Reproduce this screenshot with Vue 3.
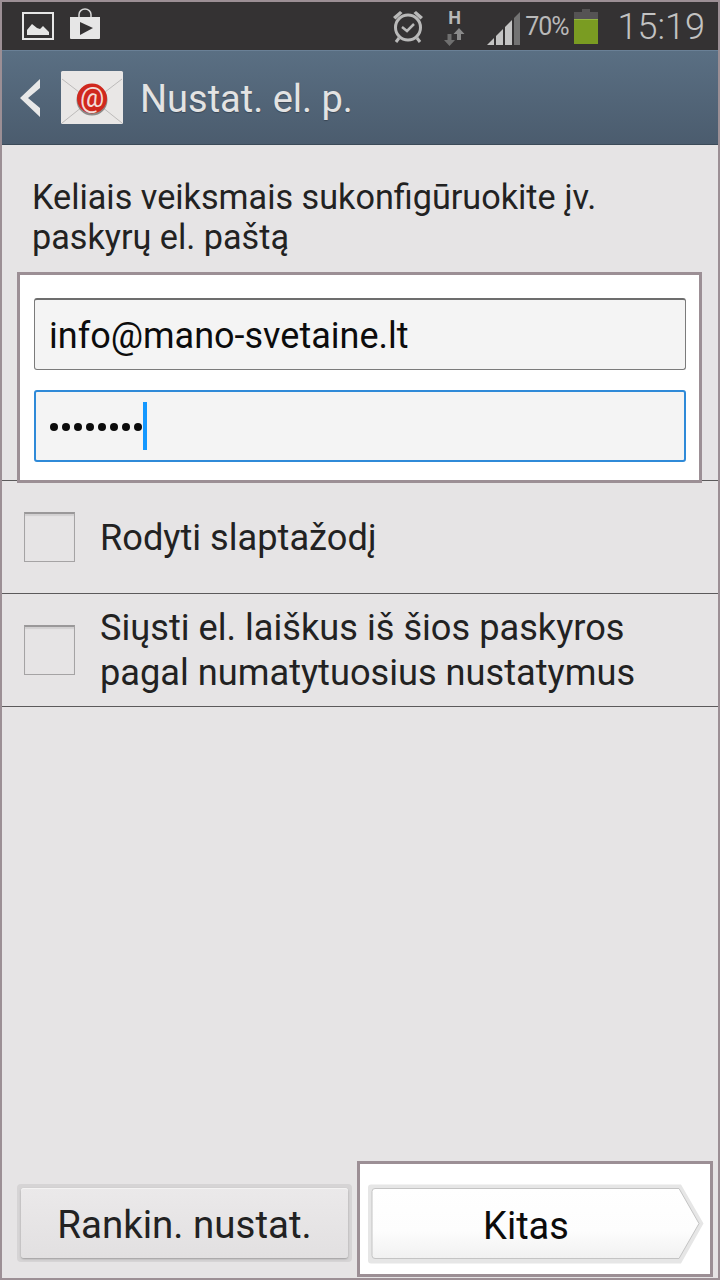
<template>
  <div class="phone">
    <div class="status-bar">
      <svg class="ic-gallery" width="32" height="28" viewBox="0 0 32 28">
        <rect x="1" y="1" width="30" height="26" fill="none" stroke="#e6e6e6" stroke-width="2" />
        <path d="M5 23v-5l5-6 5 4 3 1 3-3 6 6v3z" fill="#e6e6e6" />
      </svg>
      <svg class="ic-bag" width="32" height="32" viewBox="0 0 32 32">
        <path d="M10 9V6.500a6 5.500 0 0 1 12 0V9" fill="none" stroke="#d8d8d8" stroke-width="1.500" />
        <path d="M1 9h30v21a1 1 0 0 1-1 1H2a1 1 0 0 1-1-1z" fill="#e6e6e6" />
        <path d="M11 14l13 6-13 7z" fill="#343233" />
      </svg>
      <div class="spacer"></div>
      <svg class="ic-alarm" width="32" height="35" viewBox="0 0 32 35">
        <circle cx="16" cy="18.500" r="12.500" fill="none" stroke="#b9b9b9" stroke-width="3" />
        <path d="M1 8l7-6 2.500 2-7 6.500zM31 8l-7-6-2.500 2 7 6.500z" fill="#b9b9b9" />
        <path d="M10 18l5 4 7-7" fill="none" stroke="#b9b9b9" stroke-width="2.500" />
        <path d="M7 29l-3 4M25 29l3 4" stroke="#b9b9b9" stroke-width="3" />
      </svg>
      <div class="net">
        <span class="net-h">H</span>
        <svg width="21" height="18" viewBox="0 0 21 18">
          <path d="M3.500 6h4v6H11l-5.500 6L0 12h3.500z" fill="#6f6f6f" />
          <path d="M13 12h4V6h3.500L15 0 9.500 6H13z" fill="#8a8a8a" />
        </svg>
      </div>
      <svg class="ic-signal" width="33" height="34" viewBox="0 0 33 34">
        <path d="M0 34l7-7v7z" fill="#c4c4c4" />
        <path d="M9 34V25l7-7v16z" fill="#c4c4c4" />
        <path d="M18 34V16l7-7v25z" fill="#c4c4c4" />
        <path d="M27 34V7l6-6v33z" fill="#737373" />
      </svg>
      <span class="pct">70%</span>
      <div class="battery">
        <div class="battery-cap"></div>
        <div class="battery-empty"></div>
        <div class="battery-fill"></div>
      </div>
      <span class="clock">15:19</span>
    </div>

    <div class="action-bar">
      <svg class="ic-back" width="22" height="40" viewBox="0 0 22 40">
        <path d="M21 1v9L9 20l12 10v9L1 20z" fill="#e8e8e8" />
      </svg>
      <svg class="ic-mail" width="64" height="55" viewBox="0 0 64 55">
        <rect x="1" y="1" width="62" height="53" rx="1.500" fill="#e9e7e6" />
        <path d="M2 9l30 23L62 9M2 53l20-16M62 53L42 37" fill="none" stroke="#bdbbba" stroke-width="1" />
        <circle cx="32" cy="30" r="15.500" fill="#8d8a88" />
        <circle cx="32" cy="28.500" r="15" fill="#d0281e" />
        <text x="32" y="37" text-anchor="middle" class="mail-at">@</text>
      </svg>
      <span class="title">Nustat. el. p.</span>
    </div>

    <div class="content">
      <p class="intro">Keliais veiksmais sukonfigūruokite įv. paskyrų el. paštą</p>
      <div class="form-box">
        <div class="field">info@mano-svetaine.lt</div>
        <div class="field focused">
          <span class="dots">
            <i v-for="n in 8" :key="n"></i>
          </span>
          <span class="caret"></span>
        </div>
      </div>
      <div class="check-row first">
        <span class="checkbox"></span>
        <span class="check-label">Rodyti slaptažodį</span>
      </div>
      <div class="check-row">
        <span class="checkbox"></span>
        <span class="check-label">Siųsti el. laiškus iš šios paskyros pagal numatytuosius nustatymus</span>
      </div>
    </div>

    <div class="bottom">
      <div class="btn-wrap">
        <button class="btn">Rankin. nustat.</button>
      </div>
      <div class="next-box">
        <div class="next">
          <svg class="next-shape" width="336" height="80" viewBox="0 0 336 80">
            <defs>
              <linearGradient id="nextfill" x1="0" y1="0" x2="0" y2="1">
                <stop offset="0" stop-color="#ffffff" />
                <stop offset="0.6" stop-color="#fdfdfd" />
                <stop offset="1" stop-color="#f1f1f1" />
              </linearGradient>
            </defs>
            <path d="M3 0.500H313L335.500 39.500 313 79.500H3a3 3 0 0 1-3-3V3.500a3 3 0 0 1 3-3z" fill="#e6e6e6" />
            <path d="M7 4.500H311L331 39.500 311 74.500H7a3 3 0 0 1-3-3V7.500a3 3 0 0 1 3-3z" fill="url(#nextfill)" stroke="#c4c4c4" stroke-width="1" />
          </svg>
          <span class="next-label">Kitas</span>
        </div>
      </div>
    </div>
  </div>
</template>

<script setup>
</script>

<style>
html, body {
  margin: 0;
  background: #e6e4e5;
}
</style>

<style scoped>
.phone {
  box-sizing: border-box;
  width: 720px;
  height: 1280px;
  border: 2px solid #9c8f95;
  display: flex;
  flex-direction: column;
  background: #e6e4e5;
  font-family: Roboto, "Liberation Sans", sans-serif;
  overflow: hidden;
}
.status-bar {
  height: 48px;
  flex: none;
  background: #343233;
  display: flex;
  align-items: flex-start;
  padding-left: 20px;
}
.ic-gallery { margin-top: 10px; }
.ic-bag { margin-top: 6px; margin-left: 15px; }
.spacer { flex: 1; }
.ic-alarm { margin-top: 7px; }
.net {
  margin-left: 20px;
  margin-top: 7px;
  width: 21px;
  display: flex;
  flex-direction: column;
  align-items: center;
}
.net-h {
  font-size: 18px;
  line-height: 18px;
  font-weight: 700;
  color: #b9b9b9;
  margin-bottom: 1px;
}
.ic-signal { margin-left: 22px; margin-top: 9px; }
.pct {
  margin-left: 5px;
  margin-top: 9px;
  font-size: 25px;
  line-height: 32px;
  letter-spacing: -1px;
  color: #b9b9b9;
}
.battery {
  margin-left: 5px;
  margin-top: 7px;
  width: 24px;
  height: 35px;
  display: flex;
  flex-direction: column;
  align-items: center;
}
.battery-cap {
  width: 8px;
  height: 3px;
  background: #555354;
}
.battery-empty {
  width: 24px;
  height: 8px;
  background: #555354;
}
.battery-fill {
  width: 24px;
  height: 24px;
  background: #7a9c22;
  border-top: 1px solid #93b542;
  box-sizing: content-box;
  flex: none;
}
.clock {
  margin-left: 20px;
  margin-right: 13px;
  margin-top: 2px;
  font-size: 36px;
  line-height: 46px;
  font-weight: 300;
  color: #c2c2c2;
}

.action-bar {
  height: 95px;
  flex: none;
  box-sizing: border-box;
  background: linear-gradient(#5a6f83, #4b5c6e);
  border-top: 1px solid #6a8096;
  border-bottom: 1px solid #3b4a58;
  display: flex;
  align-items: center;
  padding-left: 17px;
}
.ic-mail { margin-left: 19px; }
.mail-at {
  font-family: Roboto, "Liberation Sans", sans-serif;
  font-size: 27px;
  font-weight: 400;
  fill: #f3dcd8;
}
.title {
  margin-left: 16px;
  padding-top: 3px;
  font-size: 38px;
  color: #e3e3e3;
  text-shadow: 0 1px 1px #3a4755;
}

.content {
  flex: 1;
  display: flex;
  flex-direction: column;
}
.intro {
  margin: 0;
  padding: 32px 80px 0 30px;
  font-size: 34.200px;
  line-height: 40px;
  color: #222;
  height: 95px;
}
.form-box {
  box-sizing: border-box;
  margin: 0 16px -3px 15px;
  height: 211px;
  position: relative;
  z-index: 1;
  background: #fff;
  border: 3px solid #9c8f95;
  padding: 23px 13px 0 14px;
  display: flex;
  flex-direction: column;
  gap: 20px;
}
.field {
  box-sizing: border-box;
  height: 72px;
  background: #f4f4f4;
  border: 1px solid #7b7b7b;
  border-top: 2px solid #6d6d6d;
  border-radius: 3px;
  padding-left: 14px;
  padding-top: 3px;
  display: flex;
  align-items: center;
  font-size: 36px;
  color: #0c0c0c;
}
.field.focused {
  border: 2px solid #2f8ad8;
  padding-top: 0;
}
.dots {
  display: flex;
  gap: 4px;
  padding-top: 1px;
}
.dots i {
  display: block;
  width: 8px;
  height: 8px;
  border-radius: 50%;
  background: #0c0c0c;
}
.caret {
  width: 4px;
  height: 48px;
  margin-left: 1px;
  background: #1498ff;
}
.check-row {
  box-sizing: border-box;
  height: 113px;
  border-bottom: 1px solid #5c5a5b;
  display: flex;
  align-items: center;
  padding-left: 22px;
}
.check-row.first {
  border-top: 1px solid #5c5a5b;
  height: 114px;
}
.checkbox {
  box-sizing: border-box;
  flex: none;
  width: 51px;
  height: 50px;
  border: 1px solid #a5a3a4;
  border-top: 2px solid #9a9899;
  box-shadow: inset 0 2px 1px #d2d0d1;
  margin-right: 25px;
}
.check-label {
  font-size: 36.200px;
  line-height: 45px;
  color: #222;
  width: 580px;
}

.bottom {
  height: 116px;
  flex: none;
  display: flex;
  align-items: flex-start;
  margin-bottom: 1px;
  padding-left: 15px;
}
.btn-wrap {
  margin-top: 23px;
  width: 335px;
  height: 78px;
  box-sizing: border-box;
  background: #d6d4d5;
  border-radius: 4px;
  padding: 4px;
}
.btn {
  display: block;
  width: 100%;
  height: 100%;
  box-sizing: border-box;
  border: none;
  border-radius: 3px;
  background: linear-gradient(#ebe9ea, #e2e0e1);
  box-shadow: 0 1px 2px #77757699, inset 0 1px 0 #f4f3f3;
  font-family: inherit;
  font-size: 38.500px;
  color: #222;
  padding: 3px 0 0;
}
.next-box {
  box-sizing: border-box;
  margin-left: 5px;
  width: 356px;
  height: 116px;
  background: #fff;
  border: 3px solid #9c8f95;
  padding: 20px 0 0 8px;
}
.next {
  position: relative;
  width: 336px;
  height: 80px;
  display: flex;
  align-items: center;
  justify-content: center;
}
.next-shape {
  position: absolute;
  left: 0;
  top: 0;
}
.next-label {
  position: relative;
  font-size: 38px;
  color: #0c0c0c;
  margin-right: 20px;
  padding-top: 3px;
}
</style>
